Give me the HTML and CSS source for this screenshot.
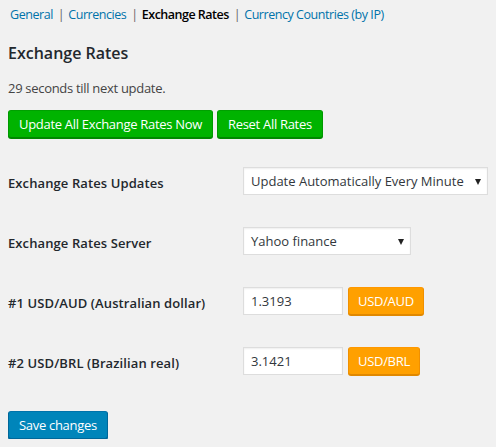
FILE: index.html
```html
<!DOCTYPE html>
<html>
<head>
<meta charset="utf-8">
<link rel="stylesheet" href="styles.css">
</head>
<body>
<div class="wrap">
  <nav class="tabs">
    <a class="tab" href="#">General</a><span class="sep">|</span><a class="tab" href="#">Currencies</a><span class="sep">|</span><span class="tab current">Exchange Rates</span><span class="sep">|</span><a class="tab" href="#">Currency Countries (by IP)</a>
  </nav>
  <h2 class="title">Exchange Rates</h2>
  <p class="note">29 seconds till next update.</p>
  <div class="actions">
    <button class="btn btn-green">Update All Exchange Rates Now</button>
    <button class="btn btn-green">Reset All Rates</button>
  </div>
  <div class="form-table">
    <div class="row">
      <label class="label">Exchange Rates Updates</label>
      <div class="field"><span class="select sel-wide">Update Automatically Every Minute</span></div>
    </div>
    <div class="row">
      <label class="label">Exchange Rates Server</label>
      <div class="field"><span class="select sel-narrow">Yahoo finance</span></div>
    </div>
    <div class="row">
      <label class="label">#1 USD/AUD (Australian dollar)</label>
      <div class="field"><input class="input" type="text" value="1.3193"><button class="btn btn-orange">USD/AUD</button></div>
    </div>
    <div class="row">
      <label class="label">#2 USD/BRL (Brazilian real)</label>
      <div class="field"><input class="input" type="text" value="3.1421"><button class="btn btn-orange">USD/BRL</button></div>
    </div>
  </div>
  <button class="btn btn-primary">Save changes</button>
</div>
</body>
</html>
```
FILE: styles.css
```css
html, body {
  margin: 0;
  padding: 0;
  background: #f1f1f1;
}
body {
  font-family: "Open Sans", "Noto Sans", sans-serif;
  font-size: 13px;
  color: #444;
}
.wrap {
  padding: 0 8px;
}
.tabs {
  margin-top: 5px;
  height: 20px;
  line-height: 20px;
  font-size: 12.5px;
  letter-spacing: -0.45px;
  white-space: nowrap;
}
.tab {
  color: #0073aa;
  text-decoration: none;
}
.tab:first-child {
  margin-left: 2px;
}
.tab.current {
  color: #000;
  font-weight: 600;
  letter-spacing: -0.5px;
}
.sep {
  color: #666;
  margin: 0 4px 0 5px;
}
.title {
  margin: 16px 0 0;
  font-size: 16px;
  line-height: 24px;
  font-weight: 600;
  color: #23282d;
}
.note {
  margin: 14px 0 0;
  line-height: 18px;
  font-size: 13px;
  letter-spacing: -0.3px;
  color: #444;
}
.actions {
  margin-top: 13px;
  display: flex;
  gap: 4px;
}
.btn {
  font-family: inherit;
  height: 28px;
  padding: 0 10px;
  font-size: 13px;
  letter-spacing: -0.3px;
  line-height: 26px;
  border-radius: 3px;
  border: 1px solid;
  color: #fff;
  cursor: pointer;
  white-space: nowrap;
}
.btn-green {
  background: #00b300;
  border-color: #00a000 #009900 #008800;
  box-shadow: 0 1px 0 #008800;
}
.btn-orange {
  background: #ffa000;
  border-color: #ff9800 #f09000 #e08800;
  box-shadow: 0 1px 0 #e08800;
  padding: 0 9px;
}
.btn-primary {
  background: #0085ba;
  border-color: #0073aa #006799 #006799;
  box-shadow: 0 1px 0 #006799;
  margin-top: 20px;
}
.form-table {
  margin-top: 13px;
}
.row {
  display: grid;
  grid-template-columns: 235px auto;
  align-items: center;
  height: 60px;
}
.label {
  font-weight: 600;
  color: #23282d;
  padding-top: 4px;
  letter-spacing: 0.1px;
}
.field {
  display: flex;
  align-items: center;
  gap: 5px;
}
.select {
  position: relative;
  box-sizing: border-box;
  height: 28px;
  line-height: 26px;
  background: #fff;
  border: 1px solid #ddd;
  box-shadow: inset 0 1px 2px rgba(0,0,0,0.07);
  padding: 0 24px 0 7px;
  color: #32373c;
  font-size: 13px;
  white-space: nowrap;
}
.select::after {
  content: "";
  position: absolute;
  right: 6px;
  top: 11px;
  border-left: 3.5px solid transparent;
  border-right: 3.5px solid transparent;
  border-top: 6px solid #222;
}
.sel-wide {
  width: 245px;
}
.sel-narrow {
  width: 168px;
}
.input {
  box-sizing: border-box;
  width: 100px;
  height: 28px;
  margin: 0;
  padding: 0 7px;
  border: 1px solid #ddd;
  box-shadow: inset 0 1px 2px rgba(0,0,0,0.07);
  background: #fff;
  font-family: inherit;
  font-size: 13px;
  color: #32373c;
}
```
